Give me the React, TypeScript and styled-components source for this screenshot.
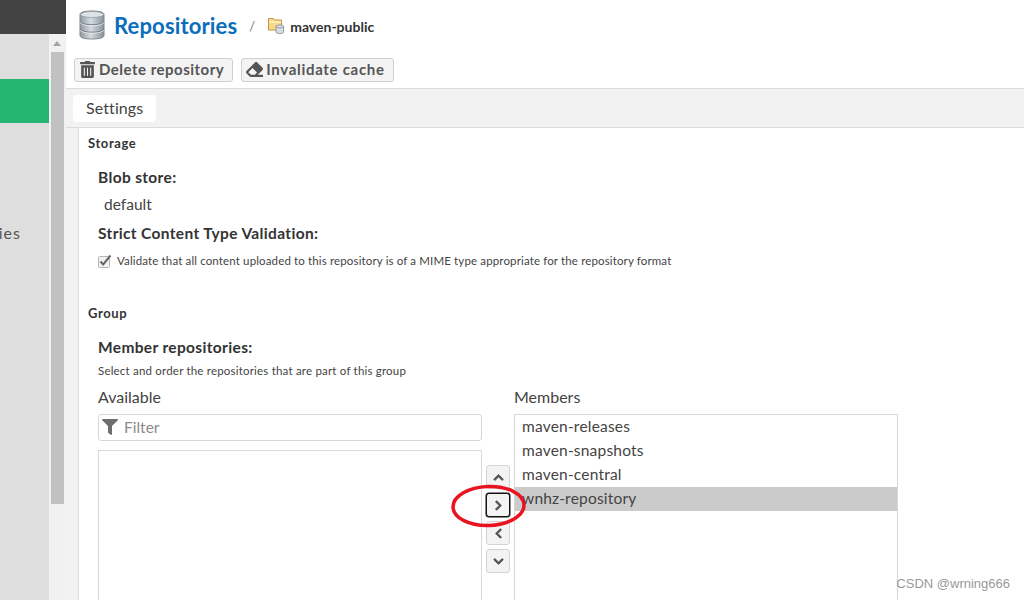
import styled, {createGlobalStyle} from 'styled-components';
import {FaChevronDown, FaChevronLeft, FaChevronRight, FaChevronUp, FaEraser, FaFilter, FaTrashAlt} from 'react-icons/fa';
import {ReactNode} from 'react';

const GlobalStyle = createGlobalStyle`
  html, body {
    margin: 0;
    height: 100%;
    overflow: hidden;
    background: #fff;
    font-family: Lato, "Open Sans", "Liberation Sans", sans-serif;
    color: #333;
  }
  #root {
    height: 100%;
  }
`;

const members = ['maven-releases', 'maven-snapshots', 'maven-central', 'wnhz-repository'];

const DatabaseIcon = () => (
  <svg width="26" height="30" viewBox="0 0 26 30">
    <defs>
      <linearGradient id="db" x1="0" x2="1" y1="0" y2="0">
        <stop offset="0" stopColor="#8f9aa3" />
        <stop offset="0.45" stopColor="#d5dade" />
        <stop offset="1" stopColor="#87929b" />
      </linearGradient>
    </defs>
    <path d="M1 4.5C1 2 6.5 1 13 1s12 1 12 3.5v21c0 2.500-5.500 3.500-12 3.500S1 28 1 25.500z" fill="url(#db)" stroke="#7d858c" />
    <ellipse cx="13" cy="4.500" rx="11.500" ry="3" fill="#dfe3e6" stroke="#8a939a" strokeWidth="0.700" />
    <path d="M1 11.500c2 2.500 7 3.200 12 3.200s10-.7 12-3.200M1 19c2 2.500 7 3.200 12 3.200s10-.7 12-3.200" fill="none" stroke="#6f7880" strokeWidth="1" />
    <path d="M1 12.500c2 2.500 7 3.200 12 3.200s10-.7 12-3.200M1 20c2 2.500 7 3.200 12 3.200s10-.7 12-3.200" fill="none" stroke="#eef0f2" strokeWidth="0.800" />
  </svg>
);

const FolderIcon = () => (
  <svg width="17" height="17" viewBox="0 0 17 17">
    <path d="M.5 1.500h5l1 1.500h7v10H.5z" fill="#f7d98b" stroke="#c8963c" />
    <path d="M1.500 5h11.500" stroke="#fff3c9" strokeWidth="1.500" />
    <path d="M8 9.500c0-1 1.500-1.500 3.800-1.500s3.800.5 3.800 1.500v5.500c0 1-1.500 1.500-3.800 1.500S8 16 8 15z" fill="#d9dee2" stroke="#7f8a93" strokeWidth="0.800" />
    <path d="M8 9.500c.5.900 1.800 1.300 3.800 1.300s3.300-.4 3.800-1.300" fill="none" stroke="#7f8a93" strokeWidth="0.800" />
  </svg>
);

const Check = () => (
  <svg width="14" height="14" viewBox="0 0 14 14">
    <rect x="0.500" y="2.500" width="11" height="11" rx="1" fill="#f1f1f1" stroke="#b5b5b5" />
    <path d="M2.500 7.500l2.700 3L12.500 1.500" fill="none" stroke="#666" strokeWidth="2" />
  </svg>
);

const MoveButton = ({focused, children}: {focused?: boolean; children: ReactNode}) => (
  <Move $focused={focused}>{children}</Move>
);

export default function App() {
  return (
    <>
      <GlobalStyle />
      <Page>
        <LeftRail>
          <TopBar />
          <RailBody>
            <Sidebar>
              <NavItem $active />
              <NavLabel>Repositories</NavLabel>
            </Sidebar>
            <ScrollBar>
              <ScrollArrow />
              <ScrollThumb />
            </ScrollBar>
          </RailBody>
        </LeftRail>

        <Main>
          <Breadcrumb>
            <DatabaseIcon />
            <Title>Repositories</Title>
            <Slash>/</Slash>
            <FolderIcon />
            <Crumb>maven-public</Crumb>
          </Breadcrumb>

          <Toolbar>
            <ToolButton $tracking={0.5}>
              <FaTrashAlt size={17} />
              Delete repository
            </ToolButton>
            <ToolButton $tracking={0.7}>
              <FaEraser size={17} />
              Invalidate cache
            </ToolButton>
          </Toolbar>

          <TabBar>
            <Tab>Settings</Tab>
          </TabBar>

          <Body>
            <Gutter />
            <Form>
              <SectionTitle>Storage</SectionTitle>
              <Field>
                <FieldLabel>Blob store:</FieldLabel>
                <StaticValue>default</StaticValue>
                <FieldLabel $tight>Strict Content Type Validation:</FieldLabel>
                <CheckRow>
                  <Check />
                  Validate that all content uploaded to this repository is of a MIME type appropriate for the repository format
                </CheckRow>
              </Field>

              <GroupTitle>Group</GroupTitle>
              <Field>
                <FieldLabel>Member repositories:</FieldLabel>
                <HelpText>Select and order the repositories that are part of this group</HelpText>
                <Transfer>
                  <Column>
                    <ColumnLabel>Available</ColumnLabel>
                    <FilterBox>
                      <FaFilter size={16} />
                      Filter
                    </FilterBox>
                    <AvailableList />
                  </Column>
                  <MoveButtons>
                    <MoveButton><FaChevronUp /></MoveButton>
                    <MoveButton focused><FaChevronRight /></MoveButton>
                    <MoveButton><FaChevronLeft /></MoveButton>
                    <MoveButton><FaChevronDown /></MoveButton>
                  </MoveButtons>
                  <Column>
                    <ColumnLabel>Members</ColumnLabel>
                    <MemberList>
                      {members.map((m) => (
                        <Member key={m} $selected={m === 'wnhz-repository'}>{m}</Member>
                      ))}
                    </MemberList>
                  </Column>
                </Transfer>
              </Field>
            </Form>
          </Body>
        </Main>

        <Annotation width="78" height="52" viewBox="0 0 78 52">
          <ellipse cx="38.500" cy="27" rx="35.500" ry="19.500" transform="rotate(-2 38 27)" fill="none" stroke="#e8141f" strokeWidth="3.500" />
        </Annotation>
        <Watermark>CSDN @wrning666</Watermark>
      </Page>
    </>
  );
}

const Page = styled.div`
  position: relative;
  display: flex;
  width: 1024px;
  height: 600px;
  overflow: hidden;
`;

const LeftRail = styled.div`
  display: flex;
  flex-direction: column;
  flex: 0 0 66px;
`;

const TopBar = styled.div`
  height: 34px;
  background: #424242;
`;

const RailBody = styled.div`
  display: flex;
  flex: 1;
`;

const Sidebar = styled.div`
  width: 50px;
  padding-top: 45px;
  background: #dedede;
  overflow: hidden;
  border-right: 1px solid #f4f4f4;
  box-sizing: border-box;
`;

const NavItem = styled.div<{$active?: boolean}>`
  height: 44px;
  background: ${(props) => (props.$active ? '#27b574' : 'transparent')};
`;

const NavLabel = styled.div`
  display: flex;
  justify-content: flex-end;
  margin-top: 100px;
  padding-right: 28px;
  font-size: 16px;
  letter-spacing: 1px;
  line-height: 20px;
  color: #555;
  white-space: nowrap;
`;

const ScrollBar = styled.div`
  width: 16px;
  background: #f1f1f1;
  display: flex;
  flex-direction: column;
  align-items: stretch;
`;

const ScrollArrow = styled.div`
  height: 18px;
  position: relative;

  &::after {
    content: '';
    position: absolute;
    left: 3px;
    top: 7px;
    border-left: 4px solid transparent;
    border-right: 4px solid transparent;
    border-bottom: 5px solid #a3a3a3;
  }
`;

const ScrollThumb = styled.div`
  height: 452px;
  margin: 0 2px 0 1px;
  background: #c1c1c1;
`;

const Main = styled.div`
  flex: 1;
  display: flex;
  flex-direction: column;
  min-width: 0;
`;

const Breadcrumb = styled.div`
  display: flex;
  align-items: center;
  height: 52px;
  padding: 0 0 2px 13px;
  box-sizing: border-box;
`;

const Title = styled.span`
  margin-left: 9px;
  font-size: 22px;
  font-weight: 700;
  letter-spacing: 0.15px;
  color: #0a6ebd;
`;

const Slash = styled.span`
  margin: 2px 13px 0 12px;
  font-size: 13px;
  color: #777;
`;

const Crumb = styled.span`
  margin: 2px 0 0 5px;
  font-size: 14px;
  font-weight: 700;
  color: #333;
`;

const Toolbar = styled.div`
  display: flex;
  gap: 8px;
  height: 37px;
  padding: 6px 0 0 8px;
  box-sizing: border-box;
  border-bottom: 1px solid #dcdcdc;
`;

const ToolButton = styled.div<{$tracking: number}>`
  display: flex;
  align-items: center;
  gap: 3px;
  height: 24px;
  padding: 0 8px 2px 4px;
  box-sizing: border-box;
  border: 1px solid #cfcfcf;
  border-radius: 3px;
  background: #f3f3f3;
  font-size: 15px;
  font-weight: 700;
  letter-spacing: ${(props) => props.$tracking}px;
  color: #555;
`;

const TabBar = styled.div`
  height: 39px;
  padding: 6px 0 0 7px;
  box-sizing: border-box;
  background: #f2f2f2;
  border-bottom: 1px solid #dcdcdc;
`;

const Tab = styled.div`
  display: inline-block;
  height: 27px;
  padding: 0 13px;
  border-radius: 4px;
  background: #fff;
  font-size: 16px;
  letter-spacing: 0.1px;
  line-height: 25px;
  color: #444;
`;

const Body = styled.div`
  flex: 1;
  display: flex;
  min-height: 0;
`;

const Gutter = styled.div`
  width: 12px;
  background: #f2f2f2;
  border-right: 1px solid #dcdcdc;
`;

const Form = styled.div`
  flex: 1;
  padding: 7px 0 0 9px;
`;

const SectionTitle = styled.div`
  font-size: 13px;
  font-weight: 700;
  letter-spacing: 0.6px;
  line-height: 16px;
  color: #333;
`;

const GroupTitle = styled(SectionTitle)`
  margin-top: 36px;
`;

const Field = styled.div`
  padding: 16px 0 0 10px;
`;

const FieldLabel = styled.div<{$tight?: boolean}>`
  margin-top: ${(props) => (props.$tight ? '9px' : '0')};
  font-size: 15.500px;
  font-weight: 700;
  letter-spacing: 0.35px;
  line-height: 20px;
  color: #333;
`;

const StaticValue = styled.div`
  margin-top: 7px;
  padding-left: 6px;
  font-size: 15.500px;
  line-height: 20px;
  color: #444;
`;

const CheckRow = styled.div`
  display: flex;
  align-items: center;
  gap: 5px;
  margin-top: 10px;
  font-size: 11.500px;
  letter-spacing: 0.14px;
  line-height: 16px;
  color: #444;
  white-space: nowrap;
`;

const HelpText = styled.div`
  margin-top: 6px;
  font-size: 11.500px;
  letter-spacing: 0.2px;
  line-height: 16px;
  color: #444;
`;

const Transfer = styled.div`
  display: flex;
  margin-top: 7px;
`;

const Column = styled.div`
  width: 384px;
  flex: none;
`;

const ColumnLabel = styled.div`
  height: 28px;
  font-size: 16px;
  line-height: 22px;
  color: #444;
`;

const FilterBox = styled.div`
  display: flex;
  align-items: center;
  gap: 6px;
  height: 27px;
  padding: 0 0 1px 3px;
  box-sizing: border-box;
  border: 1px solid #d8d8d8;
  border-radius: 3px;
  font-size: 15.500px;
  color: #8b8b8b;

  svg {
    color: #6e6e6e;
  }
`;

const AvailableList = styled.div`
  height: 200px;
  margin-top: 9px;
  border: 1px solid #d8d8d8;
`;

const MoveButtons = styled.div`
  display: flex;
  flex-direction: column;
  gap: 4px;
  width: 32px;
  flex: none;
  align-items: center;
  padding-top: 79px;
`;

const Move = styled.div<{$focused?: boolean}>`
  display: flex;
  align-items: center;
  justify-content: center;
  width: 24px;
  height: 24px;
  box-sizing: border-box;
  border: ${(props) => (props.$focused ? '1px solid #111' : '1px solid #d4d4d4')};
  box-shadow: ${(props) => (props.$focused ? '0 0 0 0.5px #111' : 'none')};
  border-radius: 3px;
  background: #f3f3f3;
  color: #555;

  svg {
    width: 11px;
    height: 11px;
    stroke: currentColor;
    stroke-width: 40px;
  }
`;

const MemberList = styled.div`
  height: 240px;
  border: 1px solid #d8d8d8;
`;

const Member = styled.div<{$selected?: boolean}>`
  height: 24px;
  padding-left: 7px;
  background: ${(props) => (props.$selected ? '#cbcbcb' : 'transparent')};
  font-size: 15.500px;
  letter-spacing: 0.2px;
  line-height: 22px;
  color: #444;
`;

const Annotation = styled.svg`
  position: absolute;
  left: 450px;
  top: 479px;
`;

const Watermark = styled.div`
  position: absolute;
  right: 14px;
  bottom: 8px;
  font-family: "Liberation Sans", sans-serif;
  font-size: 13px;
  line-height: 16px;
  color: #999;
`;
